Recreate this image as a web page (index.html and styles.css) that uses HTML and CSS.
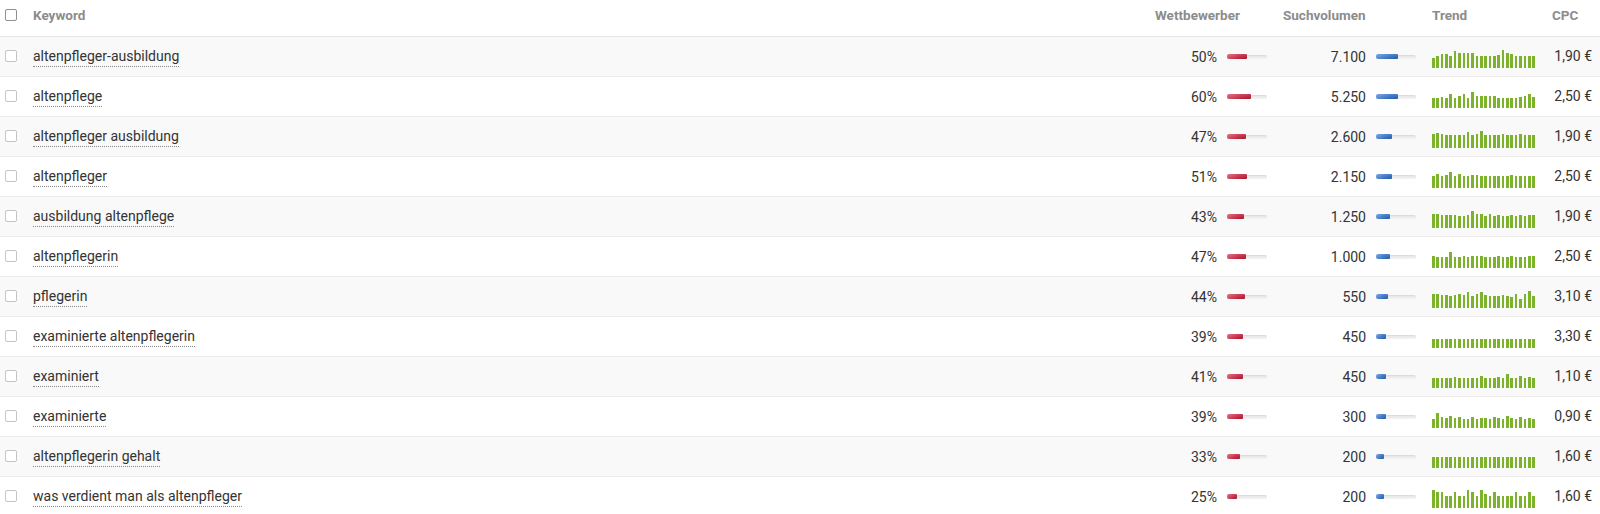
FILE: index.html
```html
<!DOCTYPE html>
<html lang="de">
<head>
<meta charset="utf-8">
<title>Keywords</title>
<link rel="stylesheet" href="styles.css">
</head>
<body>
<table class="kw-table">
  <colgroup>
    <col class="c-check">
    <col class="c-kw">
    <col class="c-comp">
    <col class="c-vol">
    <col class="c-trend">
    <col class="c-cpc">
  </colgroup>
  <thead>
    <tr>
      <th class="cell-check"><span class="box box-head"></span></th>
      <th>Keyword</th>
      <th>Wettbewerber</th>
      <th>Suchvolumen</th>
      <th>Trend</th>
      <th>CPC</th>
    </tr>
  </thead>
  <tbody>
    <tr>
      <td class="cell-check"><span class="box"></span></td>
      <td><span class="kw">altenpfleger-ausbildung</span></td>
      <td class="num"><span class="val">50%</span><span class="track"><span class="fill red" style="width:20px"></span></span></td>
      <td class="num"><span class="val">7.100</span><span class="track"><span class="fill blue" style="width:22px"></span></span></td>
      <td class="trend"><span class="bars"><i style="height:10px"></i><i style="height:12px"></i><i style="height:14px"></i><i style="height:14px"></i><i style="height:12px"></i><i style="height:17px"></i><i style="height:15px"></i><i style="height:15px"></i><i style="height:15px"></i><i style="height:15px"></i><i style="height:12px"></i><i style="height:12px"></i><i style="height:12px"></i><i style="height:12px"></i><i style="height:12px"></i><i style="height:13px"></i><i style="height:18px"></i><i style="height:15px"></i><i style="height:14px"></i><i style="height:12px"></i><i style="height:12px"></i><i style="height:12px"></i><i style="height:12px"></i><i style="height:12px"></i></span></td>
      <td class="cpc">1,90 €</td>
    </tr>
    <tr>
      <td class="cell-check"><span class="box"></span></td>
      <td><span class="kw">altenpflege</span></td>
      <td class="num"><span class="val">60%</span><span class="track"><span class="fill red" style="width:24px"></span></span></td>
      <td class="num"><span class="val">5.250</span><span class="track"><span class="fill blue" style="width:22px"></span></span></td>
      <td class="trend"><span class="bars"><i style="height:10px"></i><i style="height:10px"></i><i style="height:11px"></i><i style="height:10px"></i><i style="height:14px"></i><i style="height:10px"></i><i style="height:12px"></i><i style="height:14px"></i><i style="height:10px"></i><i style="height:16px"></i><i style="height:12px"></i><i style="height:12px"></i><i style="height:12px"></i><i style="height:12px"></i><i style="height:12px"></i><i style="height:10px"></i><i style="height:10px"></i><i style="height:10px"></i><i style="height:10px"></i><i style="height:10px"></i><i style="height:11px"></i><i style="height:12px"></i><i style="height:14px"></i><i style="height:11px"></i></span></td>
      <td class="cpc">2,50 €</td>
    </tr>
    <tr>
      <td class="cell-check"><span class="box"></span></td>
      <td><span class="kw">altenpfleger ausbildung</span></td>
      <td class="num"><span class="val">47%</span><span class="track"><span class="fill red" style="width:19px"></span></span></td>
      <td class="num"><span class="val">2.600</span><span class="track"><span class="fill blue" style="width:16px"></span></span></td>
      <td class="trend"><span class="bars"><i style="height:14px"></i><i style="height:15px"></i><i style="height:14px"></i><i style="height:13px"></i><i style="height:13px"></i><i style="height:13px"></i><i style="height:13px"></i><i style="height:13px"></i><i style="height:16px"></i><i style="height:13px"></i><i style="height:14px"></i><i style="height:17px"></i><i style="height:13px"></i><i style="height:13px"></i><i style="height:13px"></i><i style="height:13px"></i><i style="height:14px"></i><i style="height:13px"></i><i style="height:13px"></i><i style="height:13px"></i><i style="height:14px"></i><i style="height:13px"></i><i style="height:13px"></i><i style="height:13px"></i></span></td>
      <td class="cpc">1,90 €</td>
    </tr>
    <tr>
      <td class="cell-check"><span class="box"></span></td>
      <td><span class="kw">altenpfleger</span></td>
      <td class="num"><span class="val">51%</span><span class="track"><span class="fill red" style="width:20px"></span></span></td>
      <td class="num"><span class="val">2.150</span><span class="track"><span class="fill blue" style="width:16px"></span></span></td>
      <td class="trend"><span class="bars"><i style="height:12px"></i><i style="height:14px"></i><i style="height:12px"></i><i style="height:13px"></i><i style="height:16px"></i><i style="height:12px"></i><i style="height:14px"></i><i style="height:12px"></i><i style="height:12px"></i><i style="height:13px"></i><i style="height:13px"></i><i style="height:12px"></i><i style="height:12px"></i><i style="height:12px"></i><i style="height:12px"></i><i style="height:12px"></i><i style="height:12px"></i><i style="height:12px"></i><i style="height:13px"></i><i style="height:12px"></i><i style="height:12px"></i><i style="height:12px"></i><i style="height:12px"></i><i style="height:12px"></i></span></td>
      <td class="cpc">2,50 €</td>
    </tr>
    <tr>
      <td class="cell-check"><span class="box"></span></td>
      <td><span class="kw">ausbildung altenpflege</span></td>
      <td class="num"><span class="val">43%</span><span class="track"><span class="fill red" style="width:17px"></span></span></td>
      <td class="num"><span class="val">1.250</span><span class="track"><span class="fill blue" style="width:14px"></span></span></td>
      <td class="trend"><span class="bars"><i style="height:14px"></i><i style="height:14px"></i><i style="height:13px"></i><i style="height:13px"></i><i style="height:13px"></i><i style="height:13px"></i><i style="height:12px"></i><i style="height:12px"></i><i style="height:13px"></i><i style="height:17px"></i><i style="height:14px"></i><i style="height:14px"></i><i style="height:12px"></i><i style="height:14px"></i><i style="height:12px"></i><i style="height:13px"></i><i style="height:12px"></i><i style="height:12px"></i><i style="height:13px"></i><i style="height:12px"></i><i style="height:13px"></i><i style="height:12px"></i><i style="height:13px"></i><i style="height:13px"></i></span></td>
      <td class="cpc">1,90 €</td>
    </tr>
    <tr>
      <td class="cell-check"><span class="box"></span></td>
      <td><span class="kw">altenpflegerin</span></td>
      <td class="num"><span class="val">47%</span><span class="track"><span class="fill red" style="width:19px"></span></span></td>
      <td class="num"><span class="val">1.000</span><span class="track"><span class="fill blue" style="width:14px"></span></span></td>
      <td class="trend"><span class="bars"><i style="height:12px"></i><i style="height:11px"></i><i style="height:11px"></i><i style="height:11px"></i><i style="height:16px"></i><i style="height:11px"></i><i style="height:11px"></i><i style="height:12px"></i><i style="height:11px"></i><i style="height:12px"></i><i style="height:12px"></i><i style="height:12px"></i><i style="height:11px"></i><i style="height:11px"></i><i style="height:11px"></i><i style="height:12px"></i><i style="height:11px"></i><i style="height:11px"></i><i style="height:12px"></i><i style="height:11px"></i><i style="height:11px"></i><i style="height:11px"></i><i style="height:12px"></i><i style="height:12px"></i></span></td>
      <td class="cpc">2,50 €</td>
    </tr>
    <tr>
      <td class="cell-check"><span class="box"></span></td>
      <td><span class="kw">pflegerin</span></td>
      <td class="num"><span class="val">44%</span><span class="track"><span class="fill red" style="width:18px"></span></span></td>
      <td class="num"><span class="val">550</span><span class="track"><span class="fill blue" style="width:12px"></span></span></td>
      <td class="trend"><span class="bars"><i style="height:14px"></i><i style="height:14px"></i><i style="height:13px"></i><i style="height:13px"></i><i style="height:12px"></i><i style="height:13px"></i><i style="height:14px"></i><i style="height:13px"></i><i style="height:16px"></i><i style="height:12px"></i><i style="height:14px"></i><i style="height:16px"></i><i style="height:13px"></i><i style="height:12px"></i><i style="height:12px"></i><i style="height:12px"></i><i style="height:13px"></i><i style="height:12px"></i><i style="height:11px"></i><i style="height:14px"></i><i style="height:9px"></i><i style="height:14px"></i><i style="height:17px"></i><i style="height:12px"></i></span></td>
      <td class="cpc">3,10 €</td>
    </tr>
    <tr>
      <td class="cell-check"><span class="box"></span></td>
      <td><span class="kw">examinierte altenpflegerin</span></td>
      <td class="num"><span class="val">39%</span><span class="track"><span class="fill red" style="width:16px"></span></span></td>
      <td class="num"><span class="val">450</span><span class="track"><span class="fill blue" style="width:10px"></span></span></td>
      <td class="trend"><span class="bars"><i style="height:9px"></i><i style="height:9px"></i><i style="height:9px"></i><i style="height:9px"></i><i style="height:9px"></i><i style="height:9px"></i><i style="height:9px"></i><i style="height:9px"></i><i style="height:9px"></i><i style="height:9px"></i><i style="height:9px"></i><i style="height:9px"></i><i style="height:9px"></i><i style="height:9px"></i><i style="height:9px"></i><i style="height:9px"></i><i style="height:9px"></i><i style="height:9px"></i><i style="height:9px"></i><i style="height:9px"></i><i style="height:9px"></i><i style="height:9px"></i><i style="height:9px"></i><i style="height:9px"></i></span></td>
      <td class="cpc">3,30 €</td>
    </tr>
    <tr>
      <td class="cell-check"><span class="box"></span></td>
      <td><span class="kw">examiniert</span></td>
      <td class="num"><span class="val">41%</span><span class="track"><span class="fill red" style="width:16px"></span></span></td>
      <td class="num"><span class="val">450</span><span class="track"><span class="fill blue" style="width:10px"></span></span></td>
      <td class="trend"><span class="bars"><i style="height:10px"></i><i style="height:10px"></i><i style="height:10px"></i><i style="height:10px"></i><i style="height:10px"></i><i style="height:11px"></i><i style="height:10px"></i><i style="height:10px"></i><i style="height:10px"></i><i style="height:10px"></i><i style="height:10px"></i><i style="height:12px"></i><i style="height:10px"></i><i style="height:10px"></i><i style="height:10px"></i><i style="height:11px"></i><i style="height:10px"></i><i style="height:14px"></i><i style="height:10px"></i><i style="height:10px"></i><i style="height:12px"></i><i style="height:10px"></i><i style="height:11px"></i><i style="height:10px"></i></span></td>
      <td class="cpc">1,10 €</td>
    </tr>
    <tr>
      <td class="cell-check"><span class="box"></span></td>
      <td><span class="kw">examinierte</span></td>
      <td class="num"><span class="val">39%</span><span class="track"><span class="fill red" style="width:16px"></span></span></td>
      <td class="num"><span class="val">300</span><span class="track"><span class="fill blue" style="width:10px"></span></span></td>
      <td class="trend"><span class="bars"><i style="height:9px"></i><i style="height:15px"></i><i style="height:11px"></i><i style="height:10px"></i><i style="height:12px"></i><i style="height:10px"></i><i style="height:11px"></i><i style="height:9px"></i><i style="height:9px"></i><i style="height:11px"></i><i style="height:9px"></i><i style="height:10px"></i><i style="height:10px"></i><i style="height:9px"></i><i style="height:11px"></i><i style="height:10px"></i><i style="height:9px"></i><i style="height:12px"></i><i style="height:10px"></i><i style="height:9px"></i><i style="height:11px"></i><i style="height:9px"></i><i style="height:10px"></i><i style="height:9px"></i></span></td>
      <td class="cpc">0,90 €</td>
    </tr>
    <tr>
      <td class="cell-check"><span class="box"></span></td>
      <td><span class="kw">altenpflegerin gehalt</span></td>
      <td class="num"><span class="val">33%</span><span class="track"><span class="fill red" style="width:13px"></span></span></td>
      <td class="num"><span class="val">200</span><span class="track"><span class="fill blue" style="width:8px"></span></span></td>
      <td class="trend"><span class="bars"><i style="height:11px"></i><i style="height:11px"></i><i style="height:11px"></i><i style="height:11px"></i><i style="height:11px"></i><i style="height:11px"></i><i style="height:11px"></i><i style="height:11px"></i><i style="height:11px"></i><i style="height:11px"></i><i style="height:11px"></i><i style="height:11px"></i><i style="height:11px"></i><i style="height:11px"></i><i style="height:11px"></i><i style="height:11px"></i><i style="height:11px"></i><i style="height:11px"></i><i style="height:11px"></i><i style="height:11px"></i><i style="height:11px"></i><i style="height:11px"></i><i style="height:11px"></i><i style="height:11px"></i></span></td>
      <td class="cpc">1,60 €</td>
    </tr>
    <tr>
      <td class="cell-check"><span class="box"></span></td>
      <td><span class="kw">was verdient man als altenpfleger</span></td>
      <td class="num"><span class="val">25%</span><span class="track"><span class="fill red" style="width:10px"></span></span></td>
      <td class="num"><span class="val">200</span><span class="track"><span class="fill blue" style="width:8px"></span></span></td>
      <td class="trend"><span class="bars"><i style="height:18px"></i><i style="height:16px"></i><i style="height:16px"></i><i style="height:12px"></i><i style="height:12px"></i><i style="height:16px"></i><i style="height:12px"></i><i style="height:12px"></i><i style="height:18px"></i><i style="height:16px"></i><i style="height:12px"></i><i style="height:18px"></i><i style="height:14px"></i><i style="height:12px"></i><i style="height:16px"></i><i style="height:12px"></i><i style="height:12px"></i><i style="height:12px"></i><i style="height:12px"></i><i style="height:16px"></i><i style="height:12px"></i><i style="height:12px"></i><i style="height:16px"></i><i style="height:12px"></i></span></td>
      <td class="cpc">1,60 €</td>
    </tr>
  </tbody>
</table>
</body>
</html>
```

FILE: styles.css
```css
html, body {
  margin: 0;
  padding: 0;
  background: #ffffff;
}

body {
  font-family: Roboto, "Liberation Sans", Arial, sans-serif;
  font-size: 14px;
  color: #333333;
}

.kw-table {
  width: 1600px;
  border-collapse: collapse;
  table-layout: fixed;
}

.c-check { width: 25px; }
.c-comp { width: 128px; }
.c-vol { width: 149px; }
.c-trend { width: 120px; }
.c-cpc { width: 56px; }

.kw-table th {
  height: 36px;
  padding: 0 8px 6px;
  box-sizing: border-box;
  text-align: left;
  font-weight: 700;
  font-size: 13.5px;
  color: #8c8c8c;
  border-bottom: 1px solid #e6e6e6;
  vertical-align: middle;
}

.kw-table td {
  height: 40px;
  padding: 0 8px;
  box-sizing: border-box;
  border-bottom: 1px solid #ebebeb;
  vertical-align: middle;
  white-space: nowrap;
}

.kw-table tbody tr:nth-child(odd) td {
  background: #f9f9f9;
}

.kw-table th.cell-check,
.kw-table td.cell-check {
  padding: 0 0 0 5px;
}

.kw-table th.cell-check {
  padding-bottom: 6px;
}

.box {
  display: block;
  width: 12px;
  height: 12px;
  box-sizing: border-box;
  border: 1px solid #c4c4c4;
  border-radius: 2px;
  background: #ffffff;
}

.box-head {
  border-color: #8f8f8f;
}

.kw {
  border-bottom: 1px dotted #8a8a8a;
  padding-bottom: 2px;
}

.num {
  text-align: right;
}

.val {
  display: inline-block;
  vertical-align: middle;
}

.track {
  display: inline-block;
  vertical-align: middle;
  position: relative;
  width: 40px;
  height: 4px;
  margin-left: 10px;
  border-radius: 2px;
  background: linear-gradient(to bottom, #e4e4e4, #f3f3f3);
  box-shadow: inset 0 1px 1px rgba(0, 0, 0, 0.05);
}

.fill {
  position: absolute;
  left: 0;
  top: -1px;
  height: 5px;
  border-radius: 2px 1px 1px 2px;
}

.fill.red {
  background:
    linear-gradient(to bottom, rgba(255, 255, 255, 0.18), rgba(0, 0, 0, 0.06)),
    linear-gradient(to right, #d8566c 0%, #c8243f 60%, #b8142f 100%);
}

.fill.blue {
  background:
    linear-gradient(to bottom, rgba(255, 255, 255, 0.18), rgba(0, 0, 0, 0.06)),
    linear-gradient(to right, #5f95dc 0%, #3271c6 60%, #2460b2 100%);
}

.kw-table td.trend {
  padding-top: 4px;
}

.bars {
  display: flex;
  align-items: flex-end;
  justify-content: space-between;
  width: 103px;
  height: 20px;
}

.bars i {
  display: block;
  width: 2.6px;
  background: #7cb22c;
}

.cpc {
  text-align: right;
}
```
